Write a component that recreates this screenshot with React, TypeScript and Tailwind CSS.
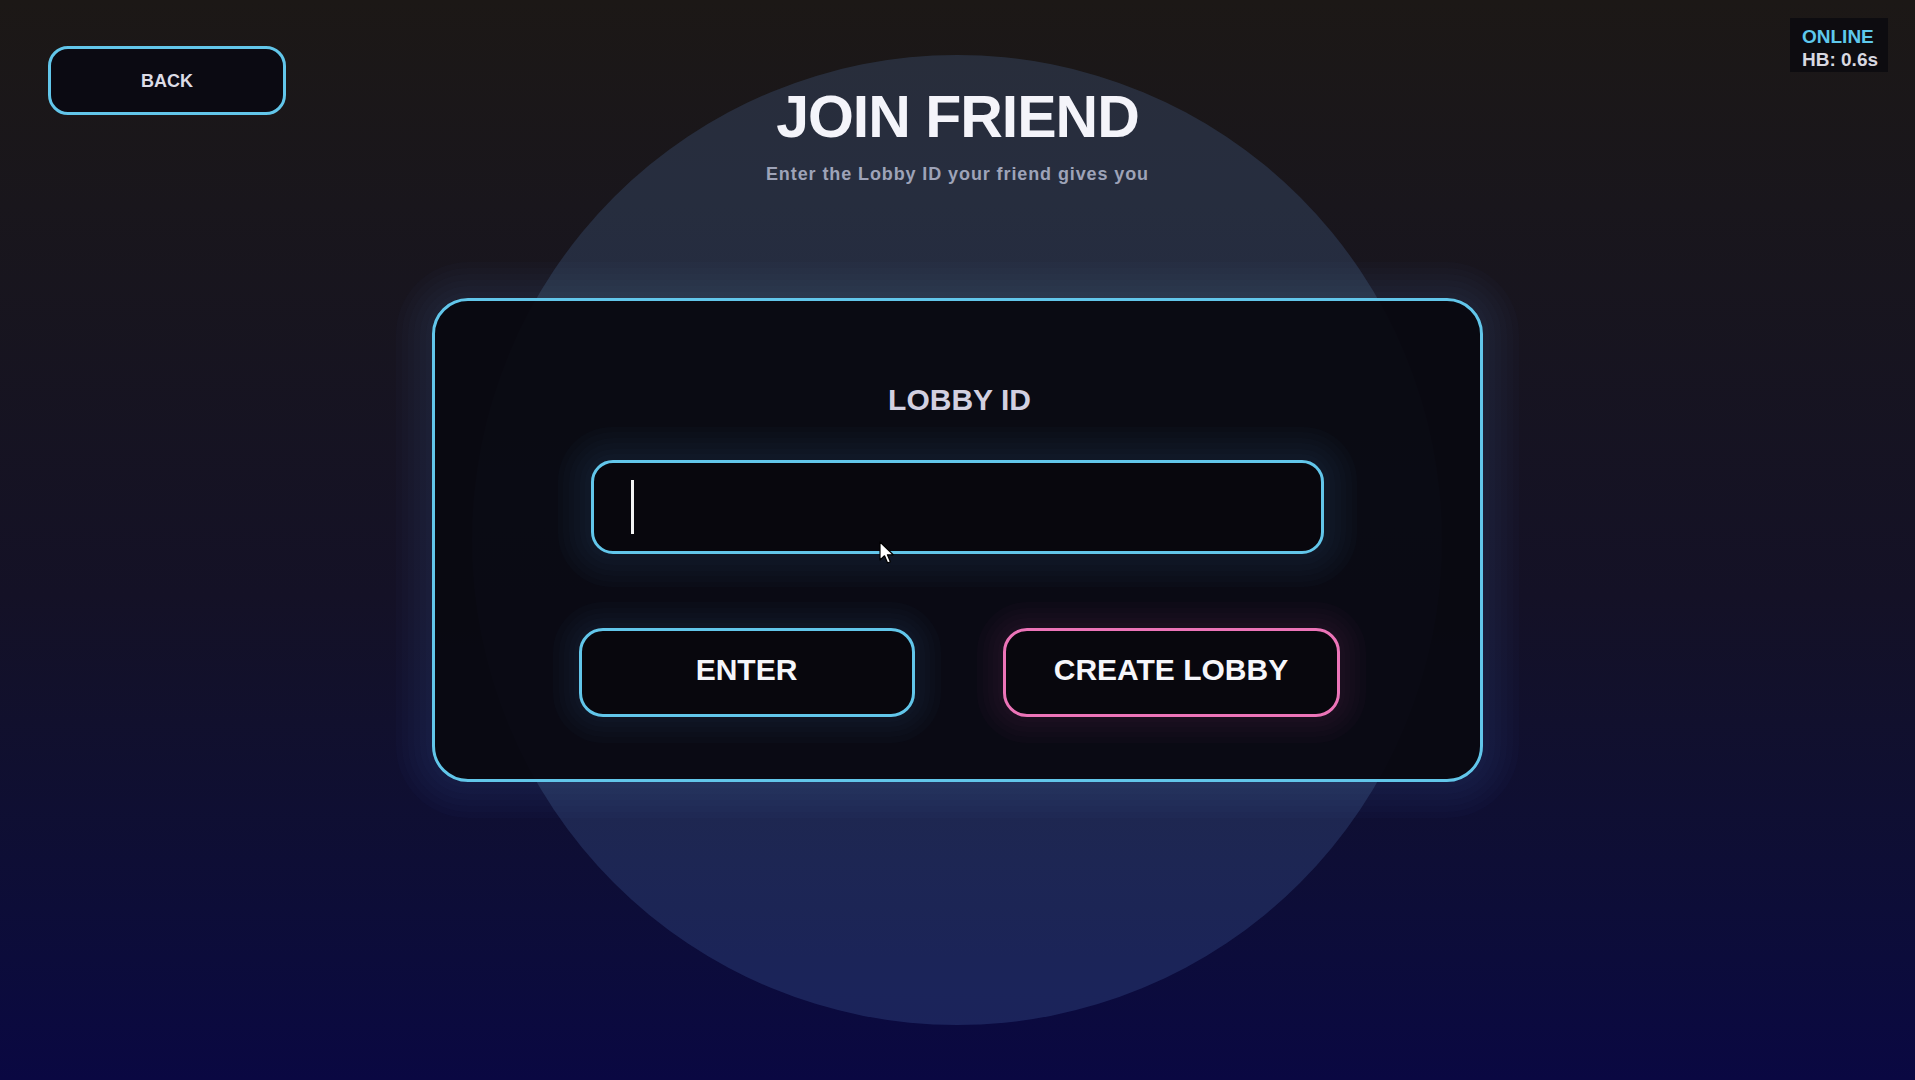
import React from "react";

const cardGlow =
  "shadow-[0_0_0_6px_rgba(120,170,230,0.014),0_0_0_12px_rgba(120,170,230,0.014),0_0_0_18px_rgba(120,170,230,0.014),0_0_0_24px_rgba(120,170,230,0.014),0_0_0_30px_rgba(120,170,230,0.014),0_0_0_36px_rgba(120,170,230,0.018)]";
const inputGlow =
  "shadow-[0_0_0_6px_rgba(110,180,240,0.016),0_0_0_11px_rgba(110,180,240,0.016),0_0_0_17px_rgba(110,180,240,0.016),0_0_0_22px_rgba(110,180,240,0.016),0_0_0_28px_rgba(110,180,240,0.016),0_0_0_33px_rgba(110,180,240,0.02)]";
const cyanGlow =
  "shadow-[0_0_0_5px_rgba(110,180,240,0.016),0_0_0_10px_rgba(110,180,240,0.016),0_0_0_15px_rgba(110,180,240,0.016),0_0_0_20px_rgba(110,180,240,0.016),0_0_0_26px_rgba(110,180,240,0.02)]";
const pinkGlow =
  "shadow-[0_0_0_5px_rgba(230,110,180,0.016),0_0_0_10px_rgba(230,110,180,0.016),0_0_0_15px_rgba(230,110,180,0.016),0_0_0_20px_rgba(230,110,180,0.016),0_0_0_26px_rgba(230,110,180,0.02)]";

function MouseCursor() {
  return (
    <svg
      className="absolute left-[879px] top-[541px] pointer-events-none"
      width="16"
      height="24"
      viewBox="0 0 16 24"
    >
      <path
        d="M1 1 L1 19 L5.5 14.8 L8.6 22 L11.4 20.8 L8.4 13.8 L14.2 13.8 Z"
        fill="#ffffff"
        stroke="#000000"
        strokeWidth="1.2"
        strokeLinejoin="round"
      />
    </svg>
  );
}

export default function App() {
  const [lobbyId, setLobbyId] = React.useState<string>("");

  return (
    <div className="relative h-[1080px] w-full overflow-hidden bg-linear-to-b from-[#1c1816] via-[#141126] via-55% to-[#0a0842] font-['Liberation_Sans',Arial,sans-serif]">
      {/* spotlight circle behind the content */}
      <div className="absolute left-[472px] top-[55px] h-[970px] w-[970px] rounded-full bg-[rgba(100,150,220,0.18)]" />

      <div className="relative grid grid-cols-[1fr_auto_1fr]">
        <div className="pl-[48px] pt-[46px]">
          <button className="flex h-[69px] w-[238px] items-center justify-center rounded-[20px] border-[3px] border-[#62c6ea] bg-[#0b0a12] pt-[2px] text-[18px] font-bold text-[#dcdce6]">
            BACK
          </button>
        </div>

        <div className="pt-[88px] text-center">
          <h1 className="text-[59px] leading-[59px] font-bold tracking-[-1px] text-[#f4f4fa]">
            JOIN FRIEND
          </h1>
          <p className="mt-[15px] text-[18px] leading-[24px] font-bold tracking-[0.9px] text-[#9ea3b8]">
            Enter the Lobby ID your friend gives you
          </p>
        </div>

        <div className="flex justify-end pr-[27px] pt-[18px]">
          <div className="h-[54px] w-[98px] bg-[#0d0c10] pl-[12px] pt-[7px] text-[19px] leading-[23px] font-bold">
            <div className="text-[#5ec8ec]">ONLINE</div>
            <div className="text-[#d8d8e0]">HB: 0.6s</div>
          </div>
        </div>
      </div>

      <div className="relative mt-[112px] flex justify-center">
        <div
          className={`flex w-[1051px] flex-col items-center rounded-[36px] border-[3px] border-[#62c6ea] bg-[rgba(9,9,16,0.93)] pt-[81px] pb-[62px] ${cardGlow}`}
        >
          <label className="pl-[4px] text-[30px] leading-[36px] font-bold text-[#d2d0e0]">
            LOBBY ID
          </label>

          <div
            className={`mt-[42px] flex h-[94px] w-[733px] items-center rounded-[22px] border-[3px] border-[#62c6ea] bg-[#08070d] pl-[37px] pr-[20px] ${inputGlow}`}
          >
            <span className="h-[54px] w-[3px] shrink-0 bg-[#f2f2f2]" />
            <input
              value={lobbyId}
              onChange={(e) => setLobbyId(e.target.value)}
              className="ml-[4px] h-full flex-1 bg-transparent text-[32px] font-bold text-white caret-transparent outline-none"
            />
          </div>

          <div className="mt-[74px] flex gap-[88px] pl-[3px]">
            <button
              className={`flex h-[89px] w-[336px] items-center justify-center rounded-[24px] border-[3px] border-[#62c6ea] bg-[#08070d] pb-[6px] text-[30px] font-bold text-[#f6f6fa] ${cyanGlow}`}
            >
              ENTER
            </button>
            <button
              className={`flex h-[89px] w-[337px] items-center justify-center rounded-[24px] border-[3px] border-[#ec74b8] bg-[#08070d] pb-[6px] text-[30px] font-bold text-[#f6f6fa] ${pinkGlow}`}
            >
              CREATE LOBBY
            </button>
          </div>
        </div>
      </div>

      <MouseCursor />
    </div>
  );
}
